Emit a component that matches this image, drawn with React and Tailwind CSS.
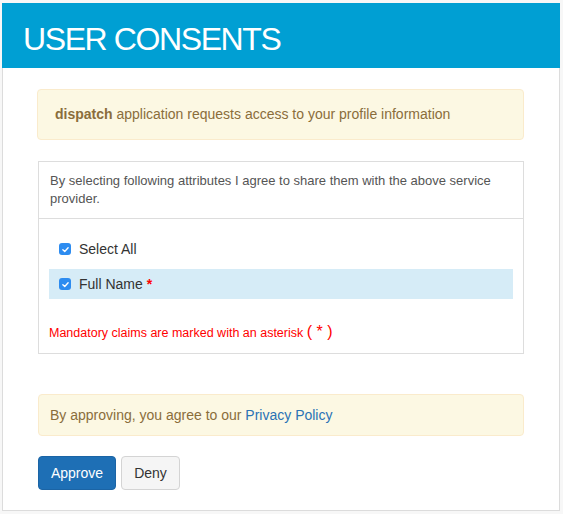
function Check() {
  return (
    <span className="flex h-[12px] w-[12px] items-center justify-center rounded-[3px] bg-[#2d8cf0]">
      <svg viewBox="0 0 12 12" className="h-[9px] w-[9px]">
        <path d="M2.5 6.3 L5 8.6 L9.5 3.6" fill="none" stroke="#fff" strokeWidth="1.8" strokeLinecap="round" strokeLinejoin="round" />
      </svg>
    </span>
  );
}

export default function App() {
  return (
    <div className="min-h-[514px] bg-[#f7f7f7] pt-[3px] pl-[2px] pr-[3px] font-['Liberation_Sans',Arial,sans-serif]">
      <div className="w-[558px] bg-white">
        <div className="flex h-[65px] items-center bg-[#009fd3] pl-[21px] pt-[6px]">
          <h1 className="text-[32px] leading-none tracking-[-1.4px] text-white">USER CONSENTS</h1>
        </div>

        <div className="border-x border-b border-[#dcdcdc] px-[35px] pt-[21px] pb-[20px]">
          <div className="-ml-px flex h-[51px] items-center rounded-[4px] border border-[#faebcc] bg-[#fcf8e3] px-[17px] text-[14px] text-[#8a6d3b]">
            <span>
              <b>dispatch</b> application requests access to your profile information
            </span>
          </div>

          <div className="mt-[21px] border border-[#dddddd]">
            <div className="border-b border-[#dddddd] px-[11px] pt-[10px] pb-[10px] text-[13px] leading-[18px] text-[#555]">
              By selecting following attributes I agree to share them with the above service provider.
            </div>
            <div className="px-[10px] pt-[15px] pb-[9px]">
              <div className="flex h-[30px] items-center gap-[8px] pl-[10px] text-[14px] text-[#333]">
                <Check />
                <span>Select All</span>
              </div>
              <div className="mt-[5px] flex h-[30px] items-center gap-[8px] bg-[#d6ecf7] pl-[10px] text-[14px] text-[#333]">
                <Check />
                <span>
                  Full Name <span className="font-bold text-[#ff0000]">*</span>
                </span>
              </div>
              <div className="mt-[21px] text-[12.5px] text-[#ff0000]">
                Mandatory claims are marked with an asterisk{" "}
                <span className="text-[16px]">( * )</span>
              </div>
            </div>
          </div>

          <div className="mt-[40px] flex h-[42px] items-center rounded-[4px] border border-[#faebcc] bg-[#fcf8e3] px-[11px] text-[14px] text-[#8a6d3b]">
            <span>
              By approving, you agree to our <span className="text-[#2a72b5]">Privacy Policy</span>
            </span>
          </div>

          <div className="mt-[20px] flex gap-[5px]">
            <button className="h-[34px] w-[78px] rounded-[4px] border border-[#1b64a5] bg-[#1e6fb5] text-[14px] text-white">
              Approve
            </button>
            <button className="h-[34px] w-[59px] rounded-[4px] border border-[#d4d4d4] bg-[#f5f5f5] text-[14px] text-[#333]">
              Deny
            </button>
          </div>
        </div>
      </div>
    </div>
  );
}
